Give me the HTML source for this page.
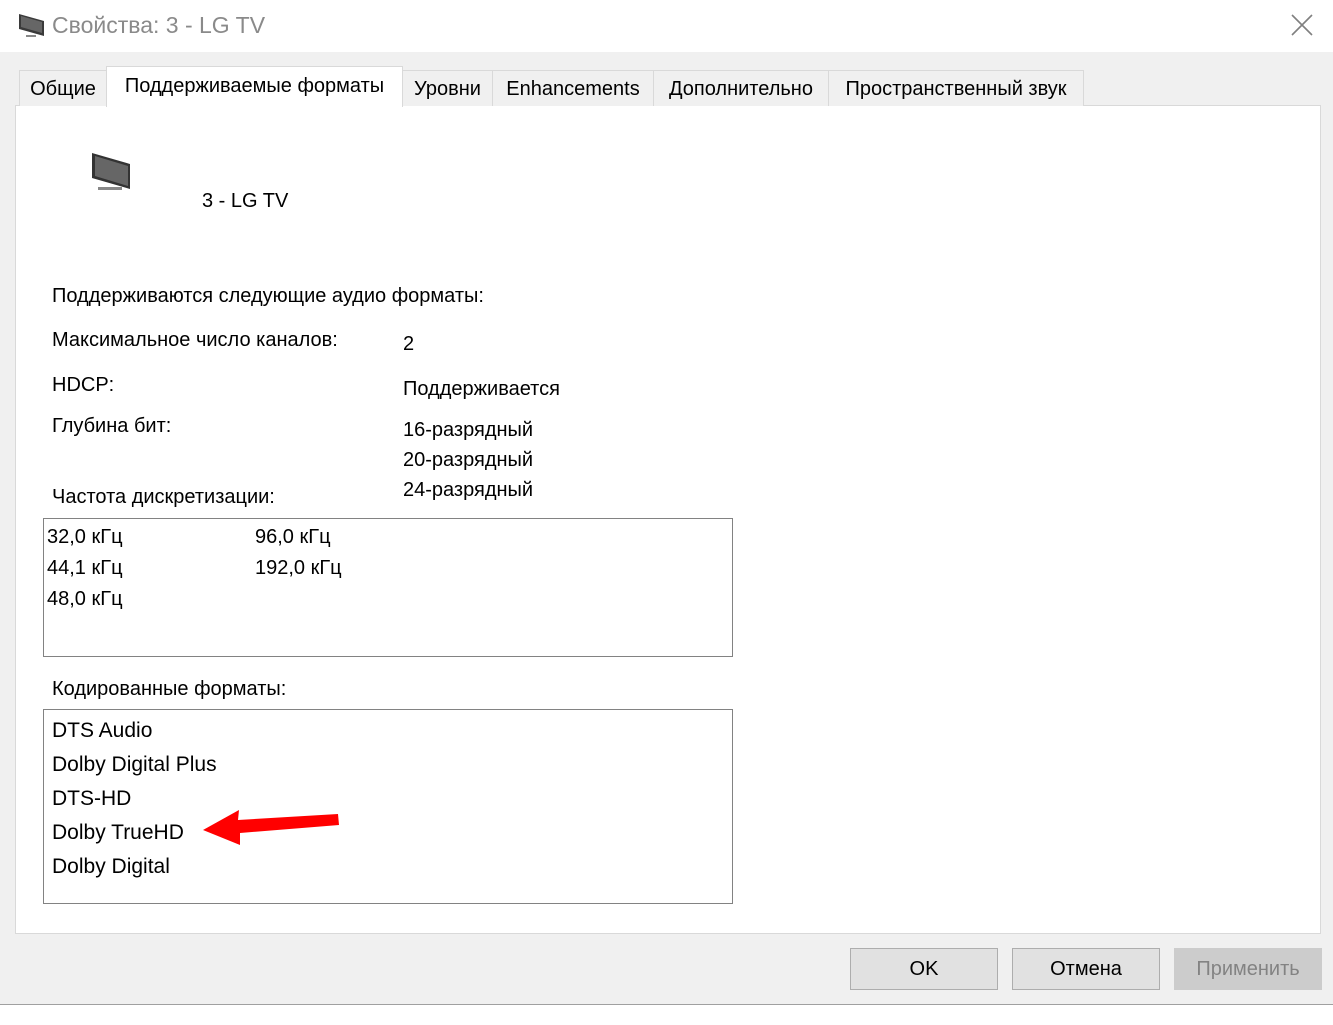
<!DOCTYPE html>
<html><head><meta charset="utf-8"><style>
*{margin:0;padding:0;box-sizing:border-box}
body{width:1333px;height:1025px;background:#fff;font-family:"Liberation Sans",sans-serif;font-size:20px;color:#000;position:relative;overflow:hidden}
.a{position:absolute;white-space:nowrap;line-height:23px}
.body{position:absolute;left:0;top:52px;width:1333px;height:953px;background:#f0f0f0;border-bottom:1px solid #a0a0a0}
.panel{position:absolute;left:15px;top:105px;width:1306px;height:829px;background:#fff;border:1px solid #d9d9d9}
.tab{position:absolute;top:70px;height:36px;background:#f0f0f0;border:1px solid #d9d9d9;border-bottom:none;padding-top:7px;text-align:center;font-size:20px}
.box{position:absolute;border:1px solid #828282;background:#fff}
.btn{position:absolute;top:948px;width:148px;height:42px;background:#e1e1e1;border:1px solid #adadad;text-align:center;line-height:41px;font-size:20px}
</style></head><body>
<svg class="a" style="left:18px;top:12px" width="28" height="26" viewBox="0 0 28 26"><polygon points="1,2 26,9 26,24 1,17" fill="#3a3a3a"/><polygon points="3,4 24,10 24,21 3,15" fill="#666"/><rect x="8" y="23" width="10" height="2" fill="#888"/></svg>
<div class="a" style="left:52px;top:14px;font-size:23px;color:#8a8a8a">Свойства: 3 - LG TV</div>
<svg class="a" style="left:1291px;top:14px" width="22" height="22"><path d="M1 1L21 21M21 1L1 21" stroke="#808080" stroke-width="1.6"/></svg>
<div class="body"></div>
<div class="panel"></div>
<div class="tab" style="left:19px;width:88px">Общие</div>
<div class="tab" style="left:106px;top:66px;height:41px;width:297px;background:#fff;padding-top:8px;z-index:2">Поддерживаемые форматы</div>
<div class="tab" style="left:402px;width:91px">Уровни</div>
<div class="tab" style="left:492px;width:162px">Enhancements</div>
<div class="tab" style="left:653px;width:176px">Дополнительно</div>
<div class="tab" style="left:828px;width:256px">Пространственный звук</div>
<svg class="a" style="left:90px;top:151px" width="44" height="42" viewBox="0 0 44 42"><polygon points="2,2 40,13 40,38 2,27" fill="#333"/><polygon points="5,5 38,15 38,35 5,25" fill="#666"/><rect x="8" y="36" width="24" height="3" fill="#888"/></svg>
<div class="a" style="left:202px;top:190px">3 - LG TV</div>
<div class="a" style="left:52px;top:285px">Поддерживаются следующие аудио форматы:</div>
<div class="a" style="left:52px;top:329px">Максимальное число каналов:</div>
<div class="a" style="left:403px;top:333px">2</div>
<div class="a" style="left:52px;top:374px">HDCP:</div>
<div class="a" style="left:403px;top:378px">Поддерживается</div>
<div class="a" style="left:52px;top:415px">Глубина бит:</div>
<div class="a" style="left:403px;top:419px">16-разрядный</div>
<div class="a" style="left:403px;top:449px">20-разрядный</div>
<div class="a" style="left:403px;top:479px">24-разрядный</div>
<div class="a" style="left:52px;top:486px">Частота дискретизации:</div>
<div class="box" style="left:43px;top:518px;width:690px;height:139px"></div>
<div class="a" style="left:47px;top:526px">32,0 кГц</div>
<div class="a" style="left:47px;top:557px">44,1 кГц</div>
<div class="a" style="left:47px;top:588px">48,0 кГц</div>
<div class="a" style="left:255px;top:526px">96,0 кГц</div>
<div class="a" style="left:255px;top:557px">192,0 кГц</div>
<div class="a" style="left:52px;top:678px">Кодированные форматы:</div>
<div class="box" style="left:43px;top:709px;width:690px;height:195px"></div>
<div class="a" style="left:52px;top:719px;font-size:21px">DTS Audio</div>
<div class="a" style="left:52px;top:753px;font-size:21px">Dolby Digital Plus</div>
<div class="a" style="left:52px;top:787px;font-size:21px">DTS-HD</div>
<div class="a" style="left:52px;top:821px;font-size:21px">Dolby TrueHD</div>
<div class="a" style="left:52px;top:855px;font-size:21px">Dolby Digital</div>
<svg class="a" style="left:200px;top:805px" width="145" height="45"><polygon points="3,25 39,5 38,15 138,9 139,20 40,28 40,40" fill="#f00"/></svg>
<div class="btn" style="left:850px">OK</div>
<div class="btn" style="left:1012px">Отмена</div>
<div class="btn" style="left:1174px;background:#cccccc;border-color:#cccccc;color:#838383">Применить</div>
</body></html>
